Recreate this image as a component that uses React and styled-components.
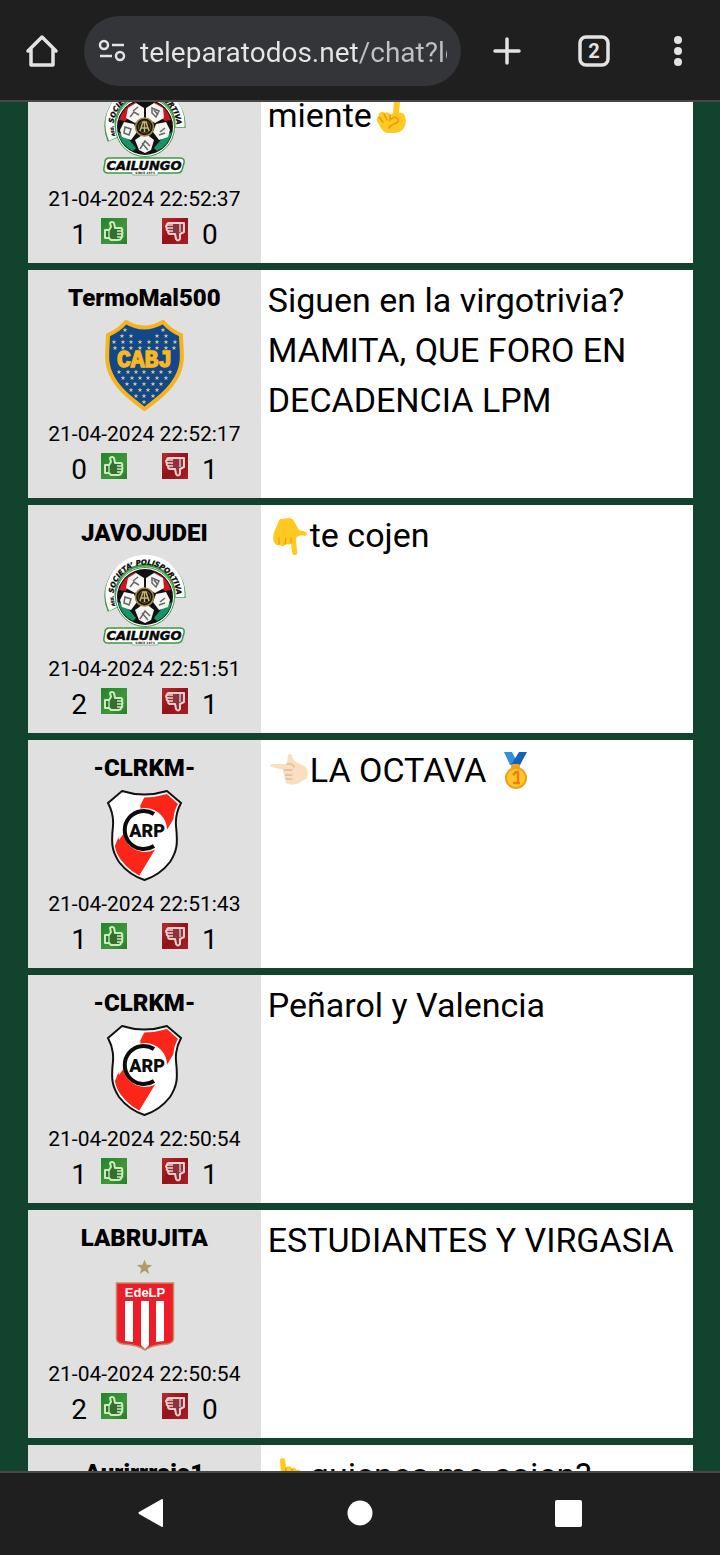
import React, { useLayoutEffect, useRef } from "react";
import styled, { createGlobalStyle } from "styled-components";

const GlobalStyle = createGlobalStyle`
  * { box-sizing: border-box; }
  body { margin: 0; background: #12432f; font-family: Roboto, "Noto Sans", sans-serif; color: #000; }
  button { border: 0; padding: 0; background: none; font: inherit; color: inherit; cursor: pointer; }
  svg { display: block; }
`;

const Screen = styled.div`
  display: flex;
  flex-direction: column;
  height: 100vh;
`;

const Toolbar = styled.header`
  display: flex;
  align-items: center;
  flex: none;
  padding: 16px 0 14px;
  background: #1f1f1f;
  border-bottom: 2px solid #484848;
  color: #e3e3e3;
`;

const ToolButton = styled.button`
  display: flex;
  align-items: center;
  justify-content: center;
  flex: none;
  width: ${(p) => p.$width}px;
  height: 70px;
`;

const AddressBar = styled.label`
  display: flex;
  align-items: center;
  gap: 14px;
  flex: 1;
  min-width: 0;
  height: 70px;
  padding: 0 14px;
  border-radius: 35px;
  background: #343539;
`;

const AddressInput = styled.input`
  flex: 1;
  min-width: 0;
  height: 44px;
  padding: 2px 0 0;
  border: 0;
  outline: 0;
  font: 400 28px/42px Roboto, sans-serif;
  color: #e3e3e3;
  background: linear-gradient(90deg, #e6e6e6 219px, #bfc1c4 219px);
  background-clip: text;
  -webkit-text-fill-color: transparent;
`;

const Feed = styled.main`
  flex: 1;
  min-height: 0;
  overflow-y: auto;
  scrollbar-width: none;
  padding: 0 27px 0 28px;
  background: #12432f;
`;

const PostList = styled.div`
  display: flex;
  flex-direction: column;
  gap: 7px;
`;

const Post = styled.article`
  display: grid;
  grid-template-columns: 7fr 13fr;
  min-height: 228px;
  background: #fff;
`;

const Author = styled.div`
  display: flex;
  flex-direction: column;
  align-items: center;
  padding-top: 7px;
  background: #e0e0e0;
`;

const Name = styled.h2`
  margin: 0;
  height: 42px;
  font-size: 24px;
  line-height: 42px;
  font-weight: 900;
`;

const Stamp = styled.time`
  margin-top: 9px;
  font-size: 21px;
  line-height: 28px;
`;

const Votes = styled.div`
  display: flex;
  gap: 35px;
  margin-top: 4px;
`;

const Vote = styled.button`
  display: flex;
  align-items: center;
  gap: 14px;
  font-size: 28px;
  line-height: 36px;

  svg { margin-bottom: 8px; }
`;

const Message = styled.p`
  margin: 0;
  padding: 5px 7px;
  font-size: 34px;
  line-height: 50px;
`;

const Emoji = styled.svg`
  display: inline-block;
  vertical-align: -8px;
`;

const NavBar = styled.nav`
  display: grid;
  grid-template-columns: repeat(3, 1fr);
  flex: none;
  height: 84px;
  padding: 0 47px 2px;
  background: #1f1f1f;
  border-top: 2px solid #484848;
`;

const NavButton = styled.button`
  display: flex;
  align-items: center;
  justify-content: center;
`;

/* Crests */

const CrestSvg = ({ title, children }) => (
  <svg width="92" height="92" viewBox="8 9 92 92" role="img" aria-label={title}>
    {children}
  </svg>
);

const starPoints = (cx, cy, r) =>
  Array.from({ length: 10 }, (_, i) => {
    const a = (Math.PI / 5) * i - Math.PI / 2;
    const q = i % 2 ? r * 0.42 : r;
    return `${(cx + q * Math.cos(a)).toFixed(2)},${(cy + q * Math.sin(a)).toFixed(2)}`;
  }).join(" ");

const bocaRows = [
  [20, [35, 73]],
  [26, [32, 41, 67, 76]],
  [32, [24, 33, 41, 50, 59, 67, 76, 85]],
  [38, [25, 33, 41, 50, 59, 67, 76, 84]],
  [62, [29, 38, 46, 54, 63, 71, 80]],
  [68, [33, 42, 50, 58, 67, 76]],
  [74, [37, 45, 54, 63, 71]],
  [80, [41, 50, 58, 67]],
  [86, [46, 54, 63]],
  [92, [54]],
];

const Boca = () => (
  <CrestSvg title="Boca Juniors">
    <path
      d="M36 12Q54 23 73 12Q81 21 91 25C91 40 95 53 86 68C79 81 65 91 54.500 99C44 91 30 81 23 68C14 53 18 40 18 25Q28 21 36 12Z"
      fill="#12478a"
      stroke="#f7b31c"
      strokeWidth="4"
    />
    {bocaRows.flatMap(([y, xs]) =>
      xs.map((x) => <polygon key={`${x}-${y}`} points={starPoints(x, y, 2.5)} fill="#d5c987" />)
    )}
    <text x="54.500" y="57" textAnchor="middle" fontFamily="Liberation Mono" fontWeight="700" fontSize="23" fill="#f9b81f" stroke="#f9b81f" strokeWidth="1.400">
      CABJ
    </text>
  </CrestSvg>
);

const River = () => (
  <CrestSvg title="River Plate">
    <clipPath id="riverShield">
      <path d="M32 14Q54 21 77 14L88 24Q82 34 84 46C86 64 84 71 78 80Q69 92 54.500 98Q40 92 31 80C25 71 23 64 25 46Q27 34 21 24Z" />
    </clipPath>
    <path
      d="M32 11Q54 18 77 11L91 23Q85 34 86 46C88 64 87 71 80 82Q70 95 54.500 100Q39 95 29 82C22 71 21 64 23 46Q24 34 18 23Z"
      fill="#fff"
      stroke="#111"
      strokeWidth="2"
    />
    <path d="M57 12H88L92 25L46 101L20 78L29 56L49 28Z" fill="#fb2618" clipPath="url(#riverShield)" />
    <path d="M26 46L51 26L49 32L29 60Z" fill="#fff" />
    <circle cx="55" cy="50" r="22" fill="#fff" />
    <path d="M64 34A19 19 0 1 0 64 66" fill="none" stroke="#0c0c0c" strokeWidth="4" />
    <text x="57" y="57" textAnchor="middle" fontFamily="Roboto" fontWeight="900" fontSize="18" fill="#0c0c0c">
      ARP
    </text>
  </CrestSvg>
);

const Estudiantes = () => (
  <CrestSvg title="Estudiantes de La Plata">
    <polygon points={starPoints(54.5, 17.5, 8)} fill="#b39b68" />
    <path
      d="M26.500 33H83.500V89Q83 93 77 94Q61 95 55 100Q49 95 33 94Q27 93 26.500 89Z"
      fill="#ee1c28"
      stroke="#bd8b60"
      strokeWidth="1.500"
    />
    <path d="M35 51H43V92L35 91ZM51 51H59V95L55 99L51 95ZM66 51H74V91L66 92Z" fill="#fff" />
    <text x="55" y="47" textAnchor="middle" fontFamily="Liberation Sans" fontWeight="700" fontSize="13" fill="#fff">
      EdeLP
    </text>
  </CrestSvg>
);

const Cailungo = () => (
  <CrestSvg title="Cailungo">
    <defs>
      <path id="cailungoArc" d="M26 63.300A31.500 31.500 0 1 1 86.500 52.600" />
    </defs>
    <path d="M22.800 64.700A35 35 0 1 1 90 52.800" fill="none" stroke="#3d9a43" strokeWidth="11" />
    <path d="M23.200 63.800A35 35 0 1 1 90 52" fill="none" stroke="#fff" strokeWidth="9" />
    <circle cx="55" cy="52" r="29.500" fill="#fff" stroke="#3d9a43" strokeWidth="1" />
    <circle cx="55" cy="52" r="28" fill="#111" />
    <path d="M29 45A27 27 0 0 1 46 27L48 36L35 46Z" fill="#cb1723" />
    <path d="M64 27A27 27 0 0 1 81 45L75 46L62 36Z" fill="#cb1723" />
    <path d="M28 57L36 61L46 73L43 76A27 27 0 0 1 28 57Z" fill="#169367" />
    <path d="M82 57L74 61L64 73L67 76A27 27 0 0 0 82 57Z" fill="#169367" />
    <g fill="#f5f5f3">
      <path d="M38 33L46 28L54 33V43L45 48L36 43Z" />
      <path d="M56 33L64 28L73 33L74 43L65 48L56 43Z" />
      <path d="M34 47L44 49L47 57L41 65L32 62L30 55Z" />
      <path d="M76 47L80 55L78 62L69 65L63 57L66 49Z" />
      <path d="M55 58L64 65L61 75L55 78L49 75L45 65Z" />
    </g>
    <path
      d="M40 42L44 37L49 40M43 36L48 32M62 33L69 36L66 42L62 38ZM64 35L68 40M35 52L41 54L39 60L34 58ZM70 57L75 53M69 60L75 58M50 74L55 66L60 71M52 68L58 75"
      fill="none"
      stroke="#666"
      strokeWidth="1.500"
    />
    <circle cx="54.500" cy="52" r="9" fill="#171713" stroke="#a58b43" strokeWidth="1.500" />
    <circle cx="54.500" cy="52" r="6" fill="none" stroke="#6d5d2b" strokeWidth="1" />
    <path d="M50 56L53 47H56L59 56M51 53H58M54.500 47V57" fill="none" stroke="#cbb56c" strokeWidth="1.500" />
    <text fontFamily="DejaVu Sans" fontStyle="italic" fontWeight="700" fontSize="7" fill="#080808" stroke="#080808" strokeWidth=".3">
      <textPath href="#cailungoArc" startOffset="50%" textAnchor="middle">
        <tspan fontSize="4">ASS.</tspan> SOCIETA’ POLISPORTIVA
      </textPath>
    </text>
    <path d="M18 83H90Q95 83 94 88L92 95Q91 98 87 98H17Q13 97 14 93L15 87Q15 84 18 83Z" fill="#fff" stroke="#3d9a43" strokeWidth="1.500" />
    <rect x="42" y="95" width="26" height="5" rx="1" fill="#fff" stroke="#3d9a43" strokeWidth=".6" />
    <rect x="41" y="93" width="28" height="4" fill="#fff" />
    <text
      x="54" y="95" textAnchor="middle" fontFamily="DejaVu Sans" fontStyle="italic" fontWeight="700" fontSize="13"
      fill="#080808" stroke="#080808" strokeWidth=".5"
    >
      CAILUNGO
    </text>
    <text x="55" y="99" textAnchor="middle" fontFamily="DejaVu Sans" fontWeight="700" fontSize="3" fill="#222">
      SINCE 1974
    </text>
  </CrestSvg>
);

/* Vote icons */

const ThumbUp = () => (
  <svg width="26" height="26" viewBox="0 0 26 26" aria-hidden="true">
    <defs>
      <linearGradient id="upBg" x1="0" y1="0" x2="1" y2="1">
        <stop offset="0" stopColor="#218527" />
        <stop offset=".6" stopColor="#41963a" />
        <stop offset="1" stopColor="#25802a" />
      </linearGradient>
    </defs>
    <rect width="26" height="26" fill="url(#upBg)" />
    <path
      d="M4 12H8L10 9L9 5Q11 3 13 5L14 10H20Q22 11 21 13Q22 15 21 17Q22 19 20 20Q20 22 17 22H10L8 20H4Z"
      fill="#33702f" stroke="#c9ecbd" strokeWidth="2" strokeLinejoin="round"
    />
    <path d="M8 12V20M16 13H21M16 16H21M16 19H20" stroke="#c9ecbd" strokeWidth="1.300" />
  </svg>
);

const ThumbDown = () => (
  <svg width="26" height="26" viewBox="0 0 26 26" aria-hidden="true">
    <defs>
      <linearGradient id="downBg" x1="0" y1="0" x2="1" y2="1">
        <stop offset="0" stopColor="#b52b2c" />
        <stop offset=".5" stopColor="#921319" />
        <stop offset="1" stopColor="#a91f24" />
      </linearGradient>
    </defs>
    <rect width="26" height="26" fill="url(#downBg)" />
    <path
      d="M22 5H17H7Q5 5 5 7Q3 8 5 10Q4 12 6 13Q6 16 8 16H13L14 21Q16 24 18 21V16L22 14Z"
      fill="#8c343d" stroke="#f3cfcc" strokeWidth="2" strokeLinejoin="round"
    />
    <path d="M18 6V14M5 7H11M5 10H11M6 13H11" stroke="#f3cfcc" strokeWidth="1.300" />
  </svg>
);

/* Emoji */

const PointUp = () => (
  <Emoji width="42" height="38" viewBox="3 0 42 38" role="img" aria-label="☝">
    <path
      d="M25 5Q25 1 28 1Q32 1 31 5L30 16Q35 15 36 20Q38 25 35 31Q32 36 24 36H18Q14 35 12 31L8 24Q7 21 10 19Q9 16 12 15Q14 14 16 16Q19 14 22 18L24 16Z"
      fill="#ffc922"
    />
    <path d="M15 17L18 23M10 20L14 25M21 18V23Q26 18 29 22Q31 25 25 27Q21 28 20 31" fill="none" stroke="#e59b0a" strokeWidth="1.500" strokeLinecap="round" />
  </Emoji>
);

const PointUpBack = () => (
  <Emoji width="42" height="38" viewBox="0 0 42 38" role="img" aria-label="👆">
    <path d="M12 3Q12 1 14.500 1Q17 1 17 3L18 10Q22 8 24 11Q27 10 29 13Q33 12 34 17V28Q31 36 24 36H17Q11 34 9 27L6 15L13 18Z" fill="#ffc922" />
    <path d="M18 11V18M24 12V18M29 14V19" stroke="#e59b0a" strokeWidth="1.500" />
  </Emoji>
);

const PointDown = () => (
  <Emoji width="42" height="38" viewBox="0 0 42 38" role="img" aria-label="👇">
    <path
      d="M13 2Q11 2 10 6L7 13Q4 20 6 25Q8 29 12 28Q15 31 18 27Q21 29 23 26L24 35Q24 38 27 38Q30 38 29 34L28 21Q31 17 37 19Q40 18 38 15L31 13L26 4Q25 2 22 1Z"
      fill="#ffc922"
    />
    <path d="M11 27V21M17 27L18 21M23 26V21" fill="none" stroke="#e7a11a" strokeWidth="1.300" strokeLinecap="round" />
  </Emoji>
);

const PointLeft = () => (
  <Emoji width="42" height="38" viewBox="0 0 42 38" role="img" aria-label="👈🏻">
    <path
      d="M3 12Q1 14 4 15L16 18Q14 22 17 23Q15 26 18 27Q16 31 20 32Q25 34 31 31L39 26Q41 21 38 15L30 11Q25 9 24 3Q22 1 20 3L19 12Z"
      fill="#f9dfc0"
    />
    <path d="M16 18H24M17 23H24M18 27H24M19 12Q25 11 26 15" fill="none" stroke="#dfba98" strokeWidth="1.300" strokeLinecap="round" />
  </Emoji>
);

const Medal = () => (
  <Emoji width="42" height="38" viewBox="0 0 42 38" role="img" aria-label="🥇">
    <path d="M9 0H17L24 13H15Z" fill="#2f91dc" />
    <path d="M24 0H32L25 13H16Z" fill="#1762b5" />
    <rect x="16" y="12" width="9" height="5" rx="2" fill="#f3a21b" />
    <circle cx="21" cy="26" r="11" fill="#efa117" />
    <circle cx="21" cy="26" r="9" fill="#ffc72b" />
    <path d="M18 23L21 20H23V30M18 31H25" fill="none" stroke="#ec7f18" strokeWidth="2.500" />
  </Emoji>
);

const posts = [
  { crest: Cailungo, name: "\u00a0", stamp: "21-04-2024 22:52:37", up: 1, down: 0, body: <>{"\u00a0"}<br />miente<PointUp /></> },
  { crest: Boca, name: "TermoMal500", stamp: "21-04-2024 22:52:17", up: 0, down: 1, body: "Siguen en la virgotrivia? MAMITA, QUE FORO EN DECADENCIA LPM" },
  { crest: Cailungo, name: "JAVOJUDEI", stamp: "21-04-2024 22:51:51", up: 2, down: 1, body: <><PointDown />te cojen</> },
  { crest: River, name: "-CLRKM-", stamp: "21-04-2024 22:51:43", up: 1, down: 1, body: <><PointLeft />LA OCTAVA <Medal /></> },
  { crest: River, name: "-CLRKM-", stamp: "21-04-2024 22:50:54", up: 1, down: 1, body: "Peñarol y Valencia" },
  { crest: Estudiantes, name: "LABRUJITA", stamp: "21-04-2024 22:50:54", up: 2, down: 0, body: "ESTUDIANTES Y VIRGASIA" },
  { name: "Aurirrrojo1", body: <><PointUpBack />quienes me cojen?</> },
];

export default function App() {
  const feed = useRef(null);

  useLayoutEffect(() => {
    feed.current.scrollTop = 67;
  }, []);

  return (
    <Screen>
      <GlobalStyle />
      <Toolbar>
        <ToolButton $width={84} aria-label="Inicio">
          <svg width="34" height="34" viewBox="0 0 34 34" fill="none" stroke="currentColor" strokeWidth="3.500" strokeLinejoin="round" strokeLinecap="round">
            <path d="M3 17L17 3L31 17M6 15V31H28V15" />
          </svg>
        </ToolButton>
        <AddressBar>
          <svg width="28" height="24" viewBox="0 0 28 24" fill="none" stroke="#e3e3e3" strokeWidth="2.500" aria-hidden="true">
            <circle cx="6" cy="6" r="4" />
            <path d="M14 6H26M2 17H14" />
            <circle cx="22" cy="17" r="4" />
          </svg>
          <AddressInput aria-label="Dirección" defaultValue="teleparatodos.net/chat?lo" spellCheck={false} />
        </AddressBar>
        <ToolButton $width={92} aria-label="Nueva pestaña">
          <svg width="28" height="28" viewBox="0 0 28 28" stroke="currentColor" strokeWidth="3.500" strokeLinecap="round">
            <path d="M14 2V26M2 14H26" />
          </svg>
        </ToolButton>
        <ToolButton $width={82} aria-label="Pestañas">
          <svg width="32" height="32" viewBox="0 0 32 32">
            <rect x="2" y="2" width="28" height="28" rx="6" fill="none" stroke="currentColor" strokeWidth="3.500" />
            <text x="16" y="23" textAnchor="middle" fontFamily="Roboto" fontWeight="700" fontSize="20" fill="currentColor">2</text>
          </svg>
        </ToolButton>
        <ToolButton $width={85} aria-label="Menú">
          <svg width="8" height="30" viewBox="0 0 8 30" fill="currentColor">
            <circle cx="4" cy="4" r="4" />
            <circle cx="4" cy="15" r="4" />
            <circle cx="4" cy="26" r="4" />
          </svg>
        </ToolButton>
      </Toolbar>

      <Feed ref={feed}>
        <PostList>
          {posts.map(({ crest: Crest, name, stamp, up, down, body }, i) => (
            <Post key={i}>
              <Author>
                <Name>{name}</Name>
                {Crest && (
                  <>
                    <Crest />
                    <Stamp>{stamp}</Stamp>
                    <Votes>
                      <Vote aria-label={`Me gusta ${up}`}>{up}<ThumbUp /></Vote>
                      <Vote aria-label={`No me gusta ${down}`}><ThumbDown />{down}</Vote>
                    </Votes>
                  </>
                )}
              </Author>
              <Message>{body}</Message>
            </Post>
          ))}
        </PostList>
      </Feed>

      <NavBar>
        <NavButton aria-label="Atrás">
          <svg width="26" height="30" viewBox="0 0 26 30" fill="#fff"><path d="M24 1Q25 1 25 2V28Q25 29 24 29L1 16Q0 15 1 14Z" /></svg>
        </NavButton>
        <NavButton aria-label="Pantalla de inicio">
          <svg width="26" height="26" viewBox="0 0 26 26" fill="#fff"><circle cx="13" cy="13" r="12.500" /></svg>
        </NavButton>
        <NavButton aria-label="Recientes">
          <svg width="27" height="27" viewBox="0 0 27 27" fill="#fff"><rect width="27" height="27" rx="2" /></svg>
        </NavButton>
      </NavBar>
    </Screen>
  );
}
